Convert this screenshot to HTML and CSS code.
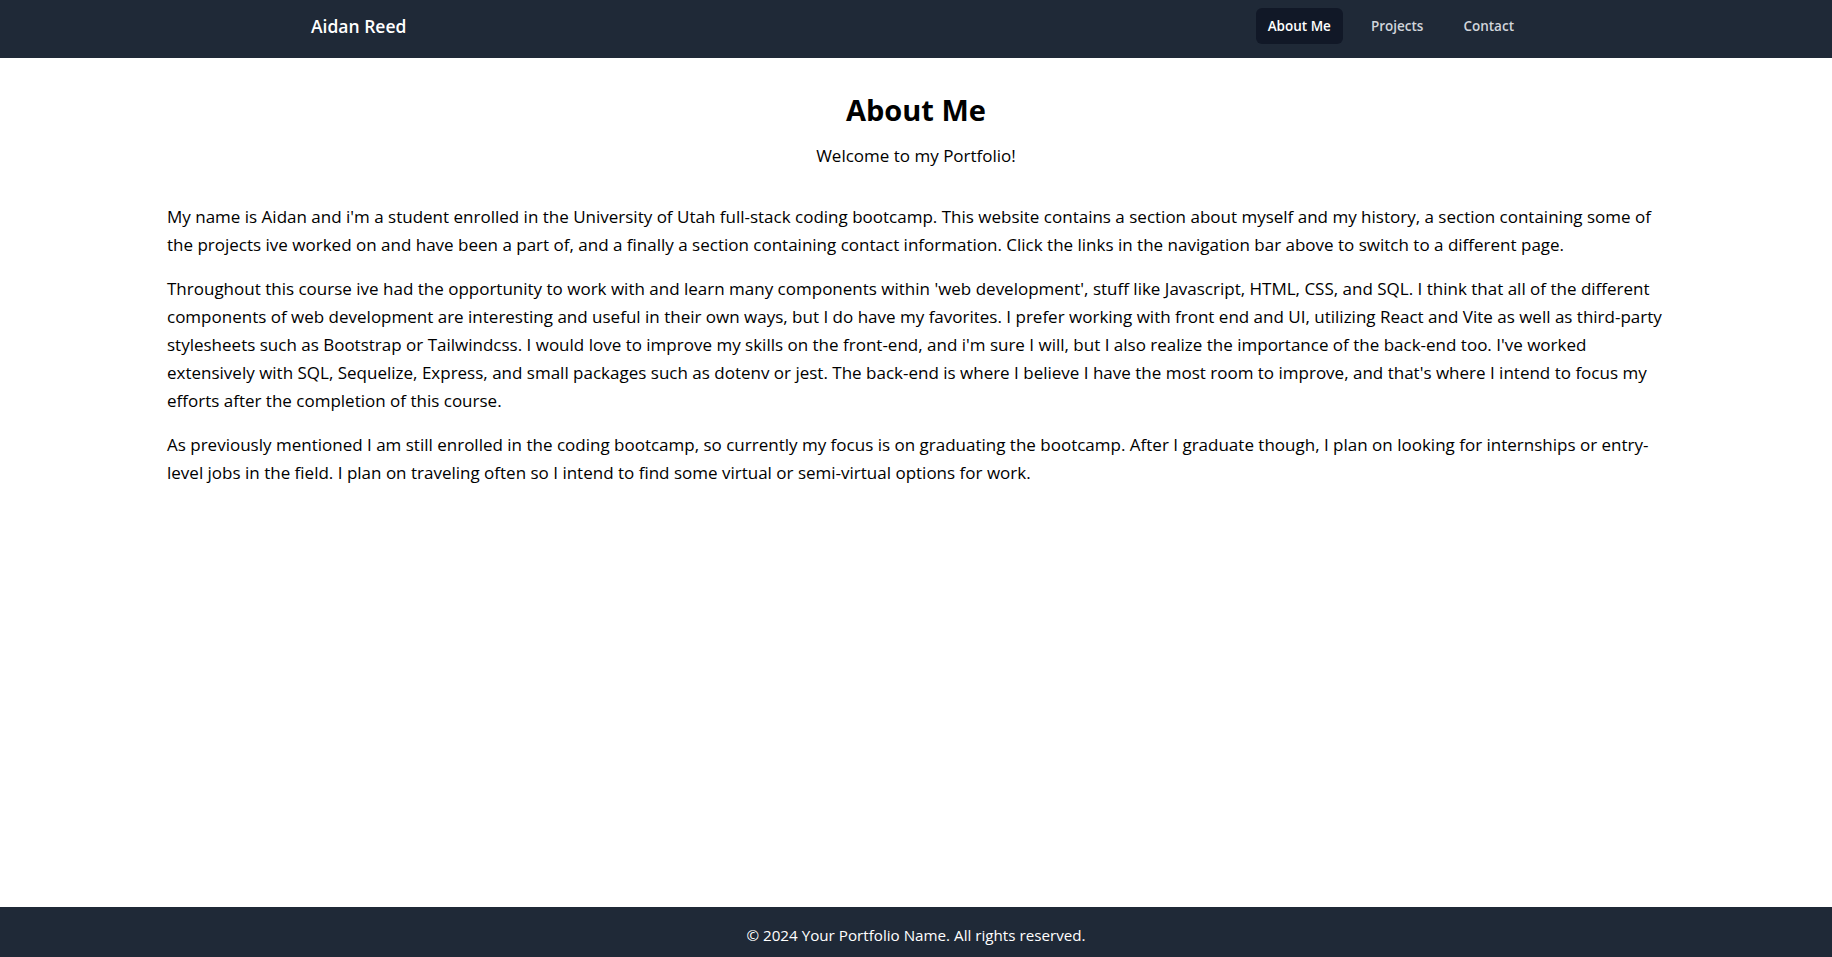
FILE: index.html
```html
<!DOCTYPE html>
<html lang="en">
<head>
<meta charset="utf-8">
<title>Aidan Reed</title>
<link rel="stylesheet" href="styles.css">
</head>
<body>
<div class="page">
  <header class="navbar">
    <div class="nav-inner">
      <a class="brand" href="#">Aidan Reed</a>
      <nav class="nav-links">
        <a class="nav-link active" href="#">About Me</a>
        <a class="nav-link" href="#">Projects</a>
        <a class="nav-link" href="#">Contact</a>
      </nav>
    </div>
  </header>
  <main class="content">
    <h1 class="title">About Me</h1>
    <p class="subtitle">Welcome to my Portfolio!</p>
    <section class="about">
      <p>My name is Aidan and i'm a student enrolled in the University of Utah full-stack coding bootcamp. This website contains a section about myself and my history, a section containing some of the projects ive worked on and have been a part of, and a finally a section containing contact information. Click the links in the navigation bar above to switch to a different page.</p>
      <p>Throughout this course ive had the opportunity to work with and learn many components within 'web development', stuff like Javascript, HTML, CSS, and SQL. I think that all of the different components of web development are interesting and useful in their own ways, but I do have my favorites. I prefer working with front end and UI, utilizing React and Vite as well as third-party stylesheets such as Bootstrap or Tailwindcss. I would love to improve my skills on the front-end, and i'm sure I will, but I also realize the importance of the back-end too. I've worked extensively with SQL, Sequelize, Express, and small packages such as dotenv or jest. The back-end is where I believe I have the most room to improve, and that's where I intend to focus my efforts after the completion of this course.</p>
      <p>As previously mentioned I am still enrolled in the coding bootcamp, so currently my focus is on graduating the bootcamp. After I graduate though, I plan on looking for internships or entry-level jobs in the field. I plan on traveling often so I intend to find some virtual or semi-virtual options for work.</p>
    </section>
  </main>
  <footer class="footer">
    <p>© 2024 Your Portfolio Name. All rights reserved.</p>
  </footer>
</div>
</body>
</html>
```

FILE: styles.css
```css
* { box-sizing: border-box; }

html, body {
  margin: 0;
  padding: 0;
  height: 100%;
}

body {
  font-family: "Open Sans", "Noto Sans", sans-serif;
  color: #000;
  background: #fff;
}

.page {
  min-height: 100vh;
  display: flex;
  flex-direction: column;
}

.navbar {
  background: #1f2937;
  height: 58px;
  padding-top: 8px;
}

.nav-inner {
  max-width: 1240px;
  margin: 0 auto;
  padding: 0 10px 0 15px;
  display: flex;
  align-items: center;
  justify-content: space-between;
  height: 36px;
}

.brand {
  color: #fff;
  text-decoration: none;
  font-size: 17.5px;
  font-weight: 600;
}

.nav-links {
  display: flex;
  gap: 16px;
}

.nav-link {
  color: #d1d5db;
  text-decoration: none;
  font-size: 13.5px;
  font-weight: 600;
  line-height: 20px;
  padding: 8px 12px;
  border-radius: 6px;
}

.nav-link.active {
  color: #fff;
  background: #111827;
}

.content {
  flex: 1;
  width: 1498px;
  margin: 0 auto;
  padding-top: 34px;
}

.title {
  margin: 0 0 14px;
  text-align: center;
  font-size: 29px;
  line-height: 36px;
  font-weight: 700;
}

.subtitle {
  margin: 0 0 33px;
  text-align: center;
  font-size: 17px;
  line-height: 28px;
}

.about p {
  margin: 0 0 16px;
  font-size: 17px;
  line-height: 28px;
}

.footer {
  background: #1f2937;
  color: #fff;
  height: 50px;
  display: flex;
  align-items: center;
  justify-content: center;
}

.footer p {
  margin: 0;
  font-size: 15.2px;
  padding-top: 5px;
}
```
